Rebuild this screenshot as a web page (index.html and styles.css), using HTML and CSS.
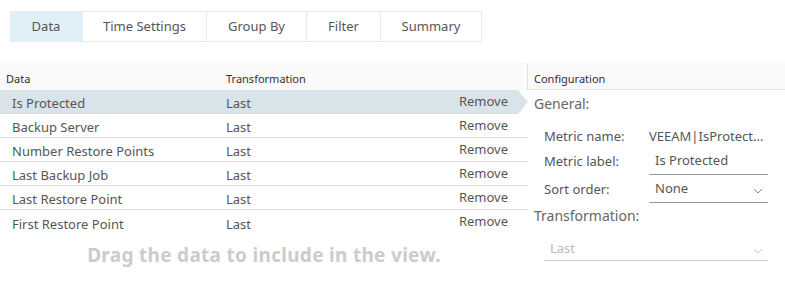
FILE: index.html
```html
<!DOCTYPE html>
<html>
  <head>
    <meta charset="utf-8">
    <title>View Editor</title>
    <link rel="stylesheet" href="styles.css">
  </head>
  <body>
    <nav class="tabs">
      <div class="tab active">Data</div>
      <div class="tab">Time Settings</div>
      <div class="tab">Group By</div>
      <div class="tab">Filter</div>
      <div class="tab">Summary</div>
    </nav>

    <div class="editor">
      <div class="dataPane">
        <div class="gridHead">
          <span class="colName">Data</span>
          <span class="colTrans">Transformation</span>
        </div>
        <ul class="rows">
          <li class="row selected"><span class="colName">Is Protected</span><span class="colTrans">Last</span><span class="remove">Remove</span></li>
          <li class="row"><span class="colName">Backup Server</span><span class="colTrans">Last</span><span class="remove">Remove</span></li>
          <li class="row"><span class="colName">Number Restore Points</span><span class="colTrans">Last</span><span class="remove">Remove</span></li>
          <li class="row"><span class="colName">Last Backup Job</span><span class="colTrans">Last</span><span class="remove">Remove</span></li>
          <li class="row"><span class="colName">Last Restore Point</span><span class="colTrans">Last</span><span class="remove">Remove</span></li>
          <li class="row last"><span class="colName">First Restore Point</span><span class="colTrans">Last</span><span class="remove">Remove</span></li>
        </ul>
        <div class="dropHint">Drag the data to include in the view.</div>
      </div>

      <div class="configPane">
        <div class="configHead">Configuration</div>
        <div class="section">General:</div>
        <ul class="form">
          <li class="nameRow">
            <label>Metric name:</label>
            <span class="value">VEEAM|IsProtect...</span>
          </li>
          <li class="labelRow">
            <label>Metric label:</label>
            <span class="value field">Is Protected</span>
          </li>
          <li class="sortRow">
            <label>Sort order:</label>
            <span class="value field select">None
              <svg class="caret" width="10" height="6" viewBox="0 0 10 6"><path d="M1 1 L5 5 L9 1" fill="none" stroke="#888" stroke-width="1"/></svg>
            </span>
          </li>
        </ul>
        <div class="section trans">Transformation:</div>
        <div class="field select disabled wide">Last
          <svg class="caret" width="10" height="6" viewBox="0 0 10 6"><path d="M1 1 L5 5 L9 1" fill="none" stroke="#ccc" stroke-width="1"/></svg>
        </div>
      </div>
    </div>
  </body>
</html>
```

FILE: styles.css
```css
* {
  box-sizing: border-box;
}

body {
  margin: 0;
  font-family: "Noto Sans", sans-serif;
  font-size: 13px;
  color: #565656;
  background: white;
}

ul,
li {
  margin: 0;
  padding: 0;
  list-style: none;
}

.tabs {
  display: flex;
  margin: 11px 0 0 10px;
}

.tab {
  height: 31px;
  line-height: 29px;
  text-align: center;
  border: 1px solid #e8e8e8;
  border-left: none;
  font-size: 13px;
  color: #565656;
}

.tab:nth-child(1) { width: 73px; }
.tab:nth-child(2) { width: 124px; }
.tab:nth-child(3) { width: 100px; }
.tab:nth-child(4) { width: 74px; }
.tab:nth-child(5) { width: 101px; }

.tab.active {
  background: #e1eff6;
  border-color: #e1eff6;
}

.editor {
  display: flex;
  margin-top: 21px;
}

.dataPane {
  width: 528px;
}

.gridHead {
  display: flex;
  align-items: center;
  height: 27px;
  background: #fafafa;
  font-size: 11px;
  color: #313131;
  padding-top: 4px;
  border-right: 1px solid #e0e0e0;
}

.colName {
  width: 226px;
  padding-left: 12px;
}

.gridHead .colName {
  padding-left: 6px;
}

.colTrans {
  width: 180px;
}

.row {
  position: relative;
  display: flex;
  align-items: center;
  height: 24px;
  border-bottom: 1px solid #dcdcdc;
}

.row.last {
  border-bottom: none;
}

.row.selected {
  background: #d9e4ea;
  margin-right: 10px;
}

.row.selected::after {
  content: "";
  position: absolute;
  right: -10px;
  top: 0;
  border-top: 12px solid transparent;
  border-bottom: 12px solid transparent;
  border-left: 10px solid #d9e4ea;
}

.row .colName,
.row .colTrans {
  padding-top: 3px;
}

.remove {
  margin-left: auto;
  padding-right: 20px;
  padding-bottom: 2px;
}

.row.selected .remove {
  padding-right: 10px;
}

.dropHint {
  text-align: center;
  font-size: 19px;
  letter-spacing: 0.3px;
  font-weight: bold;
  color: #cccccc;
  margin-top: 8px;
}

.configPane {
  flex: 1;
  padding-left: 6px;
}

.configHead {
  height: 27px;
  line-height: 31px;
  font-size: 11px;
  color: #313131;
  background: #fafafa;
  border-bottom: 1px solid #e6e6e6;
  margin-left: -6px;
  padding-left: 6px;
}

.section {
  font-size: 14px;
  color: #666;
  margin-top: 4px;
}

.form {
  margin-top: 13px;
  padding-left: 10px;
}

.form > li {
  display: flex;
  align-items: flex-end;
}

.form > .nameRow {
  height: 24px;
}

.form > .labelRow {
  height: 25px;
}

.form > .sortRow {
  height: 28px;
}

.form label {
  width: 105px;
  padding-bottom: 5px;
}

.value {
  width: 119px;
  padding-bottom: 5px;
}

.field {
  position: relative;
  border-bottom: 1px solid #999;
  padding-left: 6px;
}

.caret {
  position: absolute;
  right: 5px;
  top: 9px;
}

.section.trans {
  margin-top: 3px;
}

.wide {
  width: 224px;
  margin: 14px 0 0 10px;
  padding-bottom: 3px;
  border-bottom-color: #ccc;
  color: #bbb;
}
```
